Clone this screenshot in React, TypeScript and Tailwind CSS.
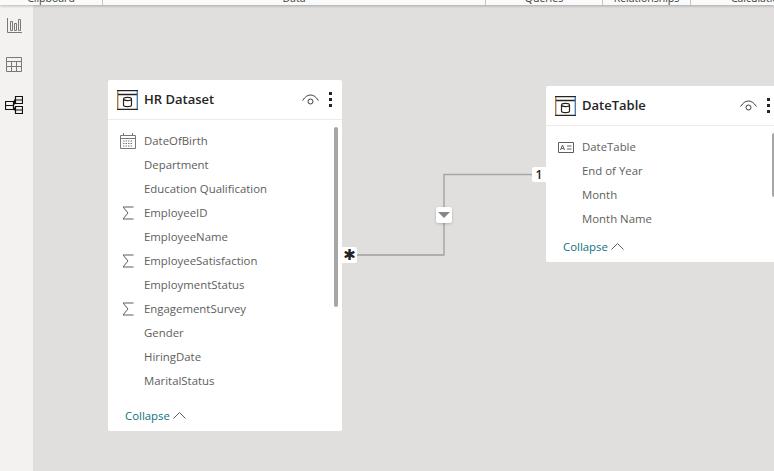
const font = { fontFamily: '"Open Sans", "Noto Sans", sans-serif' };

function TableIcon() {
  return (
    <svg width="21" height="20" viewBox="0 0 21 20" fill="none" stroke="#252423" strokeWidth="1.200" className="shrink-0">
      <path d="M.6.600h19.800v18.800H.6z" />
      <path d="M.6 4.500h19.800" strokeWidth="1.500" />
      <ellipse cx="10.500" cy="9" rx="4" ry="1.600" />
      <path d="M6.500 9v6c0 1 1.500 1.600 4 1.600s4-.6 4-1.600V9" />
      <path d="M.5 1v18" stroke="#b8752c" />
      <path d="M20.500 1v18" stroke="#3a7fc4" />
    </svg>
  );
}

function EyeIcon() {
  return (
    <svg width="17" height="12" viewBox="0 0 17 12" fill="none" stroke="#3b3a39" className="shrink-0">
      <path d="M.6 6.500C3 2.800 5.500 1 8.500 1s5.500 1.800 7.900 5.500" />
      <circle cx="8.500" cy="7.500" r="2.500" />
    </svg>
  );
}

function MoreIcon() {
  return (
    <div className="flex h-[15px] w-[3px] flex-col justify-between">
      <span className="size-[3px] bg-[#252423]" />
      <span className="size-[3px] bg-[#252423]" />
      <span className="size-[3px] bg-[#252423]" />
    </div>
  );
}

function Chevron() {
  return (
    <svg width="13" height="7" viewBox="0 0 13 7" fill="none" stroke="#605e5c">
      <path d="M.5 6.500l6-6 6 6" />
    </svg>
  );
}

function FieldIcon({ kind }: { kind?: string }) {
  if (kind === "sum") {
    return (
      <svg width="12" height="14" viewBox="0 0 12 14" fill="none" stroke="#605e5c">
        <path d="M11.500 1H1l5 6-5 6h10.500" />
      </svg>
    );
  }
  if (kind === "calendar") {
    return (
      <svg width="16" height="16" viewBox="0 0 16 16" fill="none" stroke="#7a7876">
        <path d="M.5 2.500h15v13H.5zM.5 5.500h15" />
        <path d="M3.500 0v3M12.500 0v3" />
        <path d="M3 8h10M3 10.500h10M3 13h10" strokeDasharray="1.500 1" />
      </svg>
    );
  }
  if (kind === "id") {
    return (
      <svg width="16" height="11" viewBox="0 0 16 11" fill="none" stroke="#605e5c">
        <path d="M.5.500h15v10H.5z" />
        <path d="M2.500 8l2-5 2 5M3.300 6.500h2.400M9 4h4.500M9 7h4.500" />
      </svg>
    );
  }
  return null;
}

function Field({ name, icon }: { name: string; icon?: string }) {
  return (
    <div className="flex h-6 items-center">
      <div className="flex w-[36px] shrink-0 justify-center pl-[4px]">
        <FieldIcon kind={icon} />
      </div>
      <span className="whitespace-nowrap text-[11.4px] text-[#605e5c]">{name}</span>
    </div>
  );
}

type CardProps = {
  title: string;
  fields: { name: string; icon?: string }[];
  className: string;
  thumb: string;
  listHeight: string;
};

function TableCard({ title, fields, className, thumb, listHeight }: CardProps) {
  return (
    <div className={`absolute flex flex-col overflow-hidden rounded-[2px] bg-white ${className}`}>
      <div className="flex h-[40px] shrink-0 items-center border-b border-[#edebe9] pl-[9px] pr-[10px]">
        <TableIcon />
        <span className="ml-[6px] mt-[1px] text-[13px] font-semibold text-[#252423]">{title}</span>
        <div className="ml-auto flex items-center gap-[10px]">
          <EyeIcon />
          <MoreIcon />
        </div>
      </div>
      <div className={`relative pt-[9px] ${listHeight}`}>
        {fields.map((f) => (
          <Field key={f.name} name={f.name} icon={f.icon} />
        ))}
        <div className={`absolute right-[4px] top-[7px] w-[4px] rounded-[2px] bg-[#a6a6a6] ${thumb}`} />
      </div>
      <div className="flex items-center gap-[3px] pl-[17px] text-[11.4px] text-[#0f7080]">
        Collapse
        <Chevron />
      </div>
    </div>
  );
}

// relationship line between the two tables, drawn in canvas coordinates
function Connector() {
  return (
    <>
      <svg width="200" height="100" viewBox="0 0 200 100" fill="none" className="absolute left-[320px] top-[165px]">
        <path d="M4 85h87" stroke="#7f7f7f" strokeWidth="1.200" />
        <path d="M91 85.500V4.500h88" stroke="#a6a6a6" strokeWidth="1.500" />
      </svg>
      <div className="absolute left-[309px] top-[242px] flex h-4 w-[15px] items-center justify-center rounded-r-[2px] bg-white text-[15px] leading-none text-[#252423]" style={{ fontFamily: '"DejaVu Sans", sans-serif' }}>
        ✱
      </div>
      <div className="absolute left-[499px] top-[162px] flex h-[15px] w-[14px] items-center justify-center rounded-l-[2px] bg-white text-[12px] font-semibold leading-none text-[#252423]">
        1
      </div>
      <div className="absolute left-[403px] top-[202px] flex size-4 items-center justify-center rounded-[2px] bg-white shadow-[0_1px_3px_rgba(0,0,0,0.2)]">
        <svg width="12" height="6" viewBox="0 0 12 6">
          <path d="M0 0h12L6 6z" fill="#8a8886" />
        </svg>
      </div>
    </>
  );
}

const hrFields = [
  { name: "DateOfBirth", icon: "calendar" },
  { name: "Department" },
  { name: "Education Qualification" },
  { name: "EmployeeID", icon: "sum" },
  { name: "EmployeeName" },
  { name: "EmployeeSatisfaction", icon: "sum" },
  { name: "EmploymentStatus" },
  { name: "EngagementSurvey", icon: "sum" },
  { name: "Gender" },
  { name: "HiringDate" },
  { name: "MaritalStatus" },
];

const dateFields = [
  { name: "DateTable", icon: "id" },
  { name: "End of Year" },
  { name: "Month" },
  { name: "Month Name" },
];

const ribbon = [
  { label: "Clipboard", w: "w-[103px]" },
  { label: "Data", w: "w-[383px]" },
  { label: "Queries", w: "w-[117px]" },
  { label: "Relationships", w: "w-[88px]" },
  { label: "Calculations", w: "w-[140px]" },
];

export default function App() {
  return (
    <div className="relative flex h-[471px] w-[774px] flex-col overflow-hidden bg-[#e0dfdd]" style={font}>
      <div className="z-10 flex h-[5px] shrink-0 items-end overflow-hidden bg-[#fafafa] shadow-[0_1px_3px_rgba(0,0,0,0.25)]">
        {ribbon.map((r) => (
          <div key={r.label} className={`flex h-[5px] shrink-0 items-end justify-center border-r border-[#c8c6c4] ${r.w}`}>
            <span className="whitespace-nowrap text-[10.5px] leading-[14px] text-[#3b3a39]">{r.label}</span>
          </div>
        ))}
      </div>
      <div className="flex min-h-0 flex-1">
        <nav className="flex w-[33px] shrink-0 flex-col items-center gap-[24px] bg-[#f3f2f1] pr-[5px] pt-[13px]">
          <svg width="15" height="15" viewBox="0 0 15 15" fill="none" stroke="#7a7876">
            <path d="M.5 0v14.500H15" />
            <path d="M3.500 3.500h2v9h-2zM7.500 5.500h2v7h-2zM11.500 1.500h2v11h-2z" />
          </svg>
          <svg width="16" height="15" viewBox="0 0 16 15" fill="none" stroke="#7a7876">
            <path d="M.5.500h15v14H.5zM.5 4.500h15M.5 9.500h15M5.500 4.500v10M10.500 4.500v10" />
          </svg>
          <svg width="18" height="18" viewBox="0 0 18 18" fill="none" stroke="#111" strokeWidth="1.200">
            <path d="M.5 5.500h8v8h-8zM.5 9.500h8M10.500.5h7v7h-7zM10.500 4h7M10.500 10.500h7v7h-7zM10.500 14h7" />
            <path d="M8.500 8h1V4h1M8.500 12h1v2h1" />
          </svg>
        </nav>
        <main className="relative flex-1">
          <TableCard
            title="HR Dataset"
            fields={hrFields}
            className="left-[75px] top-[75px] h-[351px] w-[234px]"
            listHeight="h-[287px]"
            thumb="h-[180px]"
          />
          <Connector />
          <TableCard
            title="DateTable"
            fields={dateFields}
            className="left-[513px] top-[81px] h-[176px] w-[234px]"
            listHeight="h-[112px]"
            thumb="h-[64px]"
          />
        </main>
      </div>
    </div>
  );
}
